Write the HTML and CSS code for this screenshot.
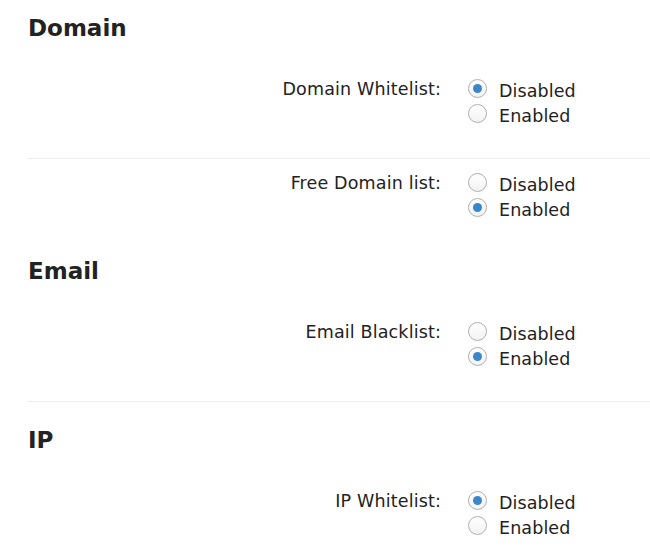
FILE: index.html
```html
<!DOCTYPE html>
<html lang="en">
  <head>
    <meta charset="UTF-8">
    <title>Filter Settings</title>
    <link rel="stylesheet" href="styles.css">
  </head>
  <body>
    <div class="settings">
      <div class="section first">
        <h2>Domain</h2>
        <div class="row">
          <label class="row-label">Domain Whitelist:</label>
          <div class="options">
            <label class="option"><input type="radio" name="domainWhitelist" checked> Disabled</label>
            <label class="option"><input type="radio" name="domainWhitelist"> Enabled</label>
          </div>
        </div>
        <div class="row divided">
          <label class="row-label">Free Domain list:</label>
          <div class="options">
            <label class="option"><input type="radio" name="freeDomain"> Disabled</label>
            <label class="option"><input type="radio" name="freeDomain" checked> Enabled</label>
          </div>
        </div>
      </div>
      <div class="section">
        <h2>Email</h2>
        <div class="row">
          <label class="row-label">Email Blacklist:</label>
          <div class="options">
            <label class="option"><input type="radio" name="emailBlacklist"> Disabled</label>
            <label class="option"><input type="radio" name="emailBlacklist" checked> Enabled</label>
          </div>
        </div>
      </div>
      <div class="section divided">
        <h2>IP</h2>
        <div class="row">
          <label class="row-label">IP Whitelist:</label>
          <div class="options">
            <label class="option"><input type="radio" name="ipWhitelist" checked> Disabled</label>
            <label class="option"><input type="radio" name="ipWhitelist"> Enabled</label>
          </div>
        </div>
      </div>
    </div>
  </body>
</html>
```

FILE: styles.css
```css
body {
	margin: 0;
	padding: 0;
	font-family: "DejaVu Sans", Verdana, sans-serif;
	color: #222;
	background: #fff;
}
.settings {
	padding-left: 28px;
}
.section {
	padding-top: 5px;
}
.section.first {
	padding-top: 14px;
}
.section.divided {
	border-top: 1px solid #ececec;
	padding-top: 24px;
}
h2 {
	margin: 0 0 23px;
	font-size: 23px;
	line-height: 28px;
	font-weight: bold;
}
.row {
	display: flex;
	align-items: flex-start;
	padding: 14px 0 29px;
}
.row.divided {
	border-top: 1px solid #ececec;
}
.row-label {
	width: 413px;
	text-align: right;
	font-size: 17.5px;
	letter-spacing: 0.15px;
	line-height: 21px;
}
.options {
	display: flex;
	flex-direction: column;
	margin-left: 27px;
}
.option {
	display: flex;
	align-items: flex-start;
	font-size: 17.5px;
	letter-spacing: 0.1px;
	line-height: 25px;
}
.option input {
	appearance: none;
	-webkit-appearance: none;
	width: 19px;
	height: 19px;
	margin: 0 12px 0 0;
	border: 1px solid #b0b0b0;
	border-radius: 50%;
	background: linear-gradient(#fff, #f2f2f2);
	box-sizing: border-box;
	display: flex;
	align-items: center;
	justify-content: center;
}
.option input:checked::after {
	content: "";
	width: 9px;
	height: 9px;
	border-radius: 50%;
	background: #3b86c9;
}
```
